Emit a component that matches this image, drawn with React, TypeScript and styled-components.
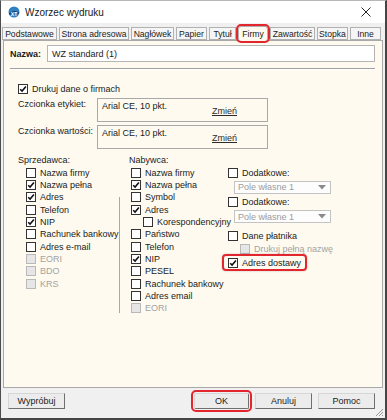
import styled, { createGlobalStyle } from 'styled-components';

const GlobalStyle = createGlobalStyle`
  body {
    margin: 0;
    font-family: "Liberation Sans", Arial, sans-serif;
    font-size: 9px;
    color: #1b1b1b;
    background: #ffffff;
  }
`;

const RED = '#e3262d';

const TABS = [
  { label: 'Podstawowe', width: 55 },
  { label: 'Strona adresowa', width: 70 },
  { label: 'Nagłówek', width: 43 },
  { label: 'Papier', width: 31 },
  { label: 'Tytuł', width: 27 },
  { label: 'Firmy', width: 30, active: true },
  { label: 'Zawartość', width: 45 },
  { label: 'Stopka', width: 31 },
  { label: 'Inne', width: 31 },
];

const SELLER = [
  { label: 'Nazwa firmy' },
  { label: 'Nazwa pełna', checked: true },
  { label: 'Adres', checked: true },
  { label: 'Telefon' },
  { label: 'NIP', checked: true },
  { label: 'Rachunek bankowy' },
  { label: 'Adres e-mail' },
  { label: 'EORI', disabled: true },
  { label: 'BDO', disabled: true },
  { label: 'KRS', disabled: true },
];

const BUYER = [
  { label: 'Nazwa firmy' },
  { label: 'Nazwa pełna', checked: true },
  { label: 'Symbol' },
  { label: 'Adres', checked: true },
  { label: 'Korespondencyjny', indent: true },
  { label: 'Państwo' },
  { label: 'Telefon' },
  { label: 'NIP', checked: true },
  { label: 'PESEL' },
  { label: 'Rachunek bankowy' },
  { label: 'Adres email' },
  { label: 'EORI', disabled: true },
];

type CheckProps = { label: string; checked?: boolean; disabled?: boolean; indent?: boolean };

const Check = ({ label, checked, disabled, indent }: CheckProps) => (
  <CheckRow $indent={indent}>
    <Box $disabled={disabled}>
      {checked && (
        <svg width="8" height="8" viewBox="0 0 8 8">
          <path d="M1.2 4.2 L3.1 6.1 L6.9 1.6" fill="none" stroke="#111" strokeWidth="1.6" />
        </svg>
      )}
    </Box>
    <CheckText $disabled={disabled}>{label}</CheckText>
  </CheckRow>
);

const Select = () => (
  <SelectBox>
    <span>Pole własne 1</span>
    <svg width="8" height="5" viewBox="0 0 8 5">
      <path d="M0 0 H8 L4 4.5 Z" fill="#8a8a8a" />
    </svg>
  </SelectBox>
);

const App = () => (
  <>
    <GlobalStyle />
    <Window>
      <TitleBar>
        <svg width="12" height="12" viewBox="0 0 12 12">
          <circle cx="6" cy="6" r="5.5" fill="#2f7fc1" />
          <path d="M1 7.5 Q6 3 11 6.5 L11 8 Q6 5 1.5 9 Z" fill="#0d3a66" />
          <text x="6" y="9.5" fontSize="5" fontWeight="bold" fill="#fff" textAnchor="middle" fontFamily="Liberation Sans">
            XT
          </text>
        </svg>
        <Title>Wzorzec wydruku</Title>
        <Close>
          <svg width="10" height="10" viewBox="0 0 10 10">
            <path d="M0.5 0.5 L9.5 9.5 M9.5 0.5 L0.5 9.5" stroke="#222" strokeWidth="1" />
          </svg>
        </Close>
      </TitleBar>

      <TabStrip>
        {TABS.map((t) => (
          <Tab key={t.label} $width={t.width} $active={t.active}>
            {t.label}
          </Tab>
        ))}
      </TabStrip>

      <Panel>
        <NameRow>
          <NameLabel>Nazwa:</NameLabel>
          <NameInput>WZ standard (1)</NameInput>
        </NameRow>
        <Separator />

        <Body>
          <Check label="Drukuj dane o firmach" checked />

          <FontRow>
            <FontLabel>Czcionka etykiet:</FontLabel>
            <FontBox>
              <span>Arial CE, 10 pkt.</span>
              <ChangeLink>Zmień</ChangeLink>
            </FontBox>
          </FontRow>
          <FontRow>
            <FontLabel>Czcionka wartości:</FontLabel>
            <FontBox>
              <span>Arial CE, 10 pkt.</span>
              <ChangeLink>Zmień</ChangeLink>
            </FontBox>
          </FontRow>

          <Columns>
            <Group>
              <GroupLabel>Sprzedawca:</GroupLabel>
              <GroupList>
                {SELLER.map((c) => (
                  <Check key={c.label} {...c} />
                ))}
              </GroupList>
            </Group>
            <Divider />
            <Group>
              <GroupLabel>Nabywca:</GroupLabel>
              <BuyerList>
                {BUYER.map((c) => (
                  <Check key={c.label} {...c} />
                ))}
              </BuyerList>
            </Group>
            <Extra>
              <Check label="Dodatkowe:" />
              <Select />
              <Check label="Dodatkowe:" />
              <Select />
              <PayerBlock>
                <Check label="Dane płatnika" />
                <Check label="Drukuj pełną nazwę" disabled indent />
              </PayerBlock>
              <Highlight>
                <Check label="Adres dostawy" checked />
              </Highlight>
            </Extra>
          </Columns>
        </Body>
      </Panel>

      <Footer>
        <Button>Wypróbuj</Button>
        <FooterRight>
          <Button $marked>OK</Button>
          <Button>Anuluj</Button>
          <Button>Pomoc</Button>
        </FooterRight>
        <Grip width="9" height="9" viewBox="0 0 9 9">
          <path d="M8 1 L1 8 M8 4 L4 8 M8 7 L7 8" stroke="#9a9a9a" strokeWidth="1" />
        </Grip>
      </Footer>
    </Window>
  </>
);

const Window = styled.div`
  box-sizing: border-box;
  width: 387px;
  height: 420px;
  display: flex;
  flex-direction: column;
  background: #f0f0f0;
  border-top: 1px solid #b8b8b8;
  border-left: 1px solid #4d4d4d;
  border-right: 2px solid #454545;
  border-bottom: 2px solid #454545;
`;

const TitleBar = styled.div`
  height: 22px;
  display: flex;
  align-items: center;
  padding-left: 7px;
  background: #ffffff;
`;

const Title = styled.span`
  margin-left: 5px;
  font-size: 10px;
  color: #1a1a1a;
`;

const Close = styled.span`
  margin-left: auto;
  margin-right: 14px;
  display: flex;
`;

const TabStrip = styled.div`
  height: 17px;
  display: flex;
  align-items: flex-end;
  gap: 2px;
  padding-left: 1px;
  position: relative;
  z-index: 1;
`;

const Tab = styled.div<{ $width: number; $active?: boolean }>`
  box-sizing: border-box;
  width: ${({ $width }) => $width}px;
  height: ${({ $active }) => ($active ? 15 : 13)}px;
  margin-bottom: ${({ $active }) => ($active ? -1 : 0)}px;
  display: flex;
  align-items: center;
  justify-content: center;
  font-size: 8.6px;
  border: 1px solid #b1b1b1;
  border-bottom: ${({ $active }) => ($active ? 'none' : '1px solid #b1b1b1')};
  background: ${({ $active }) => ($active ? '#fefaef' : '#f5f5f5')};
  white-space: nowrap;
  padding-top: ${({ $active }) => ($active ? 0 : 1)}px;
  ${({ $active }) => ($active ? `outline: 2px solid ${RED}; outline-offset: 0; border-radius: 3px;` : '')}
`;

const Panel = styled.div`
  box-sizing: border-box;
  height: 348px;
  margin: 0 2px;
  border: 1px solid #a9a9a9;
  background: #fefaef;
  padding: 4px 7px 0 6px;
`;

const NameRow = styled.div`
  display: flex;
  align-items: center;
  height: 17px;
`;

const NameLabel = styled.span`
  width: 37px;
  font-weight: bold;
`;

const NameInput = styled.div`
  box-sizing: border-box;
  flex: 1;
  height: 17px;
  display: flex;
  align-items: center;
  padding-left: 4px;
  background: #ffffff;
  border: 1px solid #b5b5b5;
`;

const Separator = styled.div`
  margin-top: 6px;
  border-top: 1px solid #a0a0a0;
  border-bottom: 1px solid #ffffff;
`;

const Body = styled.div`
  padding: 13px 0 0 8px;
  display: flex;
  flex-direction: column;
`;

const CheckRow = styled.div<{ $indent?: boolean }>`
  height: 12.33px;
  display: flex;
  align-items: center;
  gap: 4px;
  padding-left: ${({ $indent }) => ($indent ? 12 : 0)}px;
  white-space: nowrap;
`;

const Box = styled.span<{ $disabled?: boolean }>`
  box-sizing: border-box;
  width: 10px;
  height: 10px;
  flex: none;
  display: flex;
  align-items: center;
  justify-content: center;
  border: 1px solid ${({ $disabled }) => ($disabled ? '#b9b9b9' : '#333333')};
  background: ${({ $disabled }) => ($disabled ? '#e6e6e6' : '#ffffff')};
`;

const CheckText = styled.span<{ $disabled?: boolean }>`
  color: ${({ $disabled }) => ($disabled ? '#a3a3a3' : '#1b1b1b')};
`;

const FontRow = styled.div`
  display: flex;
  margin-top: 3px;
  &:first-of-type {
    margin-top: 4px;
  }
`;

const FontLabel = styled.span`
  width: 79px;
  padding-top: 1px;
`;

const FontBox = styled.div`
  box-sizing: border-box;
  width: 171px;
  height: 24px;
  display: flex;
  align-items: flex-start;
  padding: 2px 4px;
  border: 1px solid #a8a8a8;
  background: #fefaef;
`;

const ChangeLink = styled.span`
  margin: 5px 26px 0 auto;
  text-decoration: underline;
  color: #2b2b2b;
`;

const Columns = styled.div`
  display: grid;
  grid-template-columns: 101px 10px 99px auto;
  margin-top: 5px;
`;

const Group = styled.div`
  display: flex;
  flex-direction: column;
`;

const GroupLabel = styled.div`
  height: 12.33px;
  display: flex;
  align-items: center;
`;

const GroupList = styled.div`
  padding-left: 8px;
`;

const BuyerList = styled.div`
  padding-left: 2px;
`;

const Divider = styled.div`
  margin-top: 43px;
  height: 116px;
  border-left: 1px solid #a8a8a8;
`;

const Extra = styled.div`
  display: flex;
  flex-direction: column;
  align-items: flex-start;
  padding-top: 12.33px;
`;

const SelectBox = styled.div`
  box-sizing: border-box;
  width: 97px;
  height: 13px;
  margin: 2px 0 2px 6px;
  display: flex;
  align-items: center;
  justify-content: space-between;
  padding: 0 4px 0 3px;
  border: 1px solid #c3c3c3;
  background: #fdfdfd;
  color: #9c9c9c;
`;

const PayerBlock = styled.div`
  margin-top: 5px;
`;

const Highlight = styled.div`
  margin: -1px 0 0 -6px;
  padding: 1px 4px 0 4px;
  border: 2px solid ${RED};
  border-radius: 4px;
  box-shadow: 0 0 2px rgba(0, 0, 0, 0.25);
`;

const Footer = styled.div`
  flex: 1;
  position: relative;
  display: flex;
  align-items: flex-start;
  padding: 5px 10px 0 7px;
`;

const FooterRight = styled.div`
  margin-left: auto;
  display: flex;
  gap: 6px;
`;

const Button = styled.div<{ $marked?: boolean }>`
  box-sizing: border-box;
  width: ${({ $marked }) => ($marked ? 55 : 57)}px;
  height: 16px;
  display: flex;
  align-items: center;
  justify-content: center;
  background: #ececec;
  border: 1px solid;
  border-color: #d6d6d6 #6f6f6f #6f6f6f #d6d6d6;
  ${({ $marked }) => ($marked ? `outline: 2px solid ${RED}; outline-offset: 1px; border-radius: 2px;` : '')}
`;

const Grip = styled.svg`
  position: absolute;
  right: 1px;
  bottom: 1px;
`;

export default App;
